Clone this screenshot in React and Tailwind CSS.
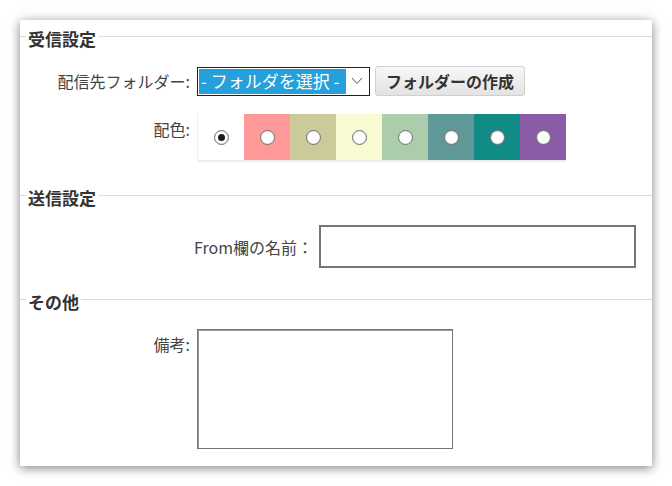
import React from "react"

const swatches = [
  { color: "bg-white", checked: true },
  { color: "bg-[#fe9998]" },
  { color: "bg-[#cbcb99]" },
  { color: "bg-[#fafad2]" },
  { color: "bg-[#abcdab]" },
  { color: "bg-[#609797]" },
  { color: "bg-[#108b86]" },
  { color: "bg-[#8a5ca7]" },
]

function Legend({ children }) {
  return (
    <div className="flex items-start h-6">
      <div className="mt-[9px] w-[6px] h-px bg-[#dcdcdc]" />
      <span className="px-[2px] text-[17px] font-bold text-[#333] leading-6">{children}</span>
      <div className="mt-[9px] flex-1 h-px bg-[#dcdcdc]" />
    </div>
  )
}

function Radio({ checked }) {
  return (
    <span className="flex h-[15px] w-[15px] items-center justify-center rounded-full border border-[#6f6f6f] bg-white shadow-[inset_0_0_1px_rgba(0,0,0,0.3)]">
      {checked && <span className="h-[7px] w-[7px] rounded-full bg-[#1a1a1a]" />}
    </span>
  )
}

export default function App() {
  return (
    <div
      className="w-[672px] h-[486px] bg-white p-5"
      style={{ fontFamily: '"Noto Sans CJK JP", "Noto Sans", sans-serif' }}
    >
      <div className="h-[446px] bg-white pt-[7px] shadow-[0_2px_10px_rgba(0,0,0,0.5)]">
        {/* 受信設定 */}
        <Legend>受信設定</Legend>

        <div className="mt-[15px] flex items-center">
          <div className="w-[170px] text-right text-[16px] text-[#444]">配信先フォルダー:</div>
          <div className="ml-[7px] flex h-[29px] w-[173px] items-center border border-[#222] bg-white p-px">
            <div className="flex h-full flex-1 items-center bg-[#26a0da] pl-[2px] text-[17px] text-white whitespace-nowrap">
              - フォルダを選択 -
            </div>
            <div className="flex h-full w-[22px] items-center justify-center">
              <svg width="12" height="8" viewBox="0 0 12 8" fill="none" stroke="#555" strokeWidth="1">
                <polyline points="1,1 6,6.5 11,1" />
              </svg>
            </div>
          </div>
          <button className="ml-[5px] h-[30px] rounded-[3px] border border-[#d0d0d0] bg-gradient-to-b from-[#f7f7f7] to-[#e3e3e3] px-[10px] text-[16px] font-bold text-[#333]">
            フォルダーの作成
          </button>
        </div>

        <div className="mt-[18px] flex items-start">
          <div className="w-[170px] pt-[3px] text-right text-[16px] text-[#444]">配色:</div>
          <div className="ml-[7px] flex border-b-2 border-l border-[#eeeeee]">
            {swatches.map((s, i) => (
              <div key={i} className={`flex h-[46px] w-[46px] items-center justify-center ${s.color}`}>
                <Radio checked={s.checked} />
              </div>
            ))}
          </div>
        </div>

        {/* 送信設定 */}
        <div className="mt-[24px]">
          <Legend>送信設定</Legend>
        </div>

        <div className="mt-[15px] flex items-center">
          <div className="w-[293px] text-right text-[16px] text-[#444]">From欄の名前：</div>
          <div className="ml-[6px] h-[43px] w-[317px] border-2 border-[#767676] bg-white" />
        </div>

        {/* その他 */}
        <div className="mt-[22px]">
          <Legend>その他</Legend>
        </div>

        <div className="mt-[15px] flex items-start">
          <div className="w-[170px] pt-[3px] text-right text-[16px] text-[#444]">備考:</div>
          <div className="ml-[7px] h-[120px] w-[256px] border border-[#767676] bg-white shadow-[inset_1px_1px_0_#999]" />
        </div>
      </div>
    </div>
  )
}
